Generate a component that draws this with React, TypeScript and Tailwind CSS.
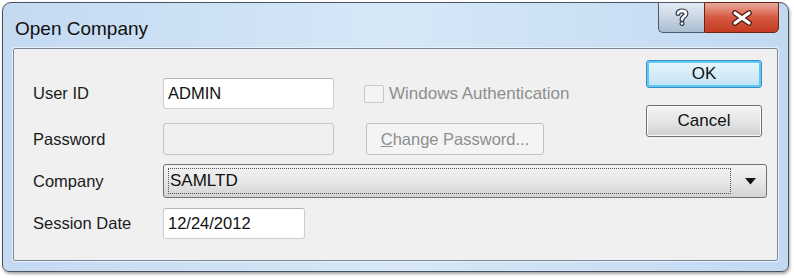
import React from "react";

const font = "font-['Liberation_Sans',Arial,sans-serif]";

function CaptionButtons() {
  return (
    <div className="flex h-[31px] -mt-px">
      <div className="w-[46px] h-full rounded-bl-[5px] border border-[#4c5a6b] border-r-0 bg-gradient-to-b from-[#e3ebf3] via-[#c9d6e3] to-[#a9bccf] flex items-center justify-center">
        <svg width="14" height="19" viewBox="0 0 14 19">
          <path d="M3 5.5 C3 2 11 2 11 5.8 C11 8.5 7 8.6 7 11.5" fill="none" stroke="#2f3a48" strokeWidth="5" strokeLinecap="round" />
          <circle cx="7" cy="15.5" r="2.5" fill="#2f3a48" />
          <path d="M3 5.5 C3 2 11 2 11 5.8 C11 8.5 7 8.6 7 11.5" fill="none" stroke="#ffffff" strokeWidth="2.6" strokeLinecap="round" />
          <circle cx="7" cy="15.5" r="1.3" fill="#ffffff" />
        </svg>
      </div>
      <div className="w-[75px] h-full rounded-br-[5px] border border-[#6b2418] bg-gradient-to-b from-[#e9a99b] via-[#d4583f] to-[#c43b22] flex items-center justify-center">
        <svg width="22" height="16" viewBox="0 0 22 16">
          <path d="M4 3 L18 13 M18 3 L4 13" stroke="#4a1a12" strokeWidth="5.6" strokeLinecap="round" />
          <path d="M4 3 L18 13 M18 3 L4 13" stroke="#ffffff" strokeWidth="3.2" strokeLinecap="round" />
        </svg>
      </div>
    </div>
  );
}

function TextBox({ value, w, disabled }: { value?: string; w: string; disabled?: boolean }) {
  return (
    <div
      className={`${w} h-[31px] rounded-[3px] border ${
        disabled ? "bg-[#f0f0f0] border-[#c4c4c4]" : "bg-white border-[#cdcdcd] border-t-[#b5b5b5]"
      } flex items-center pl-[4px] text-[16.5px] text-[#111]`}
    >
      {value}
    </div>
  );
}

export default function App() {
  return (
    <div className={`w-[794px] h-[278px] bg-white overflow-hidden ${font}`}>
      <div className="ml-[2px] mt-[2px] w-[787px] h-[270px] rounded-t-[9px] rounded-b-[7px] border border-[#4a535d] bg-gradient-to-r from-[#c4daf1] via-[#d6e8f8] to-[#c2d9f1] shadow-[1px_2px_3px_rgba(0,0,0,0.35)] flex flex-col">
        <div className="h-[45px] flex items-start pl-[12px] pr-[9px]">
          <div className="mt-[15px] text-[19px] leading-[22px] text-[#111]">Open Company</div>
          <div className="ml-auto">
            <CaptionButtons />
          </div>
        </div>
        <div className="mx-[10px] h-[213px] border border-[#7b8795] rounded-[2px] bg-[#f0f0f0] shadow-[0_0_0_1px_#e8f2fc] pt-[11px] pl-[19px] text-[16.5px] text-[#1a1a1a]">
          <div className="flex">
            <div className="flex flex-col mt-[18px] gap-[14px]">
              <div className="flex items-center h-[31px]">
                <div className="w-[130px]">User ID</div>
                <TextBox value="ADMIN" w="w-[171px]" />
                <div className="ml-[30px] w-[20px] h-[18px] border border-[#c8c8c8] bg-[#f4f4f4] rounded-[2px]" />
                <div className="ml-[5px] text-[#8e8e8e] text-[17px]">Windows Authentication</div>
              </div>
              <div className="flex items-center h-[32px]">
                <div className="w-[130px]">Password</div>
                <TextBox w="w-[171px] !h-[32px]" disabled />
                <div className="ml-[32px] w-[178px] h-[32px] rounded-[3px] border border-[#c2c2c2] bg-[#f4f4f4] flex items-center justify-center text-[#8e8e8e]">
                  <span>
                    <span className="underline">C</span>hange Password...
                  </span>
                </div>
              </div>
            </div>
            <div className="ml-auto mr-[15px] flex flex-col w-[116px]">
              <div className="h-[28px] rounded-[3px] border border-[#3c8fc6] shadow-[inset_0_0_0_2px_#61c8f3] bg-gradient-to-b from-[#eaf6fd] to-[#bfe2f5] flex items-center justify-center text-[#111] text-[17px]">
                OK
              </div>
              <div className="mt-[17px] h-[32px] rounded-[3px] border border-[#707070] shadow-[inset_0_0_0_1px_#fbfbfb] bg-gradient-to-b from-[#f4f4f4] via-[#e6e6e6] to-[#cfcfcf] flex items-center justify-center text-[#111] text-[17px]">
                Cancel
              </div>
            </div>
          </div>
          <div className="flex items-center mt-[9px] h-[34px]">
            <div className="w-[130px]">Company</div>
            <div className="w-[604px] h-[34px] rounded-[3px] border border-[#707070] bg-gradient-to-b from-[#f3f3f3] via-[#e8e8e8] to-[#d3d3d3] flex items-center pl-[4px] pr-[10px]">
              <div className="flex-1 h-[26px] border border-dotted border-[#555] flex items-center pl-[1px] text-[#111] text-[17px]">SAMLTD</div>
              <svg className="ml-[14px]" width="11" height="7" viewBox="0 0 11 7">
                <path d="M0 0 H11 L5.5 6.5 Z" fill="#111" />
              </svg>
            </div>
          </div>
          <div className="flex items-center mt-[10px] h-[31px]">
            <div className="w-[130px]">Session Date</div>
            <TextBox value="12/24/2012" w="w-[142px]" />
          </div>
        </div>
      </div>
    </div>
  );
}
